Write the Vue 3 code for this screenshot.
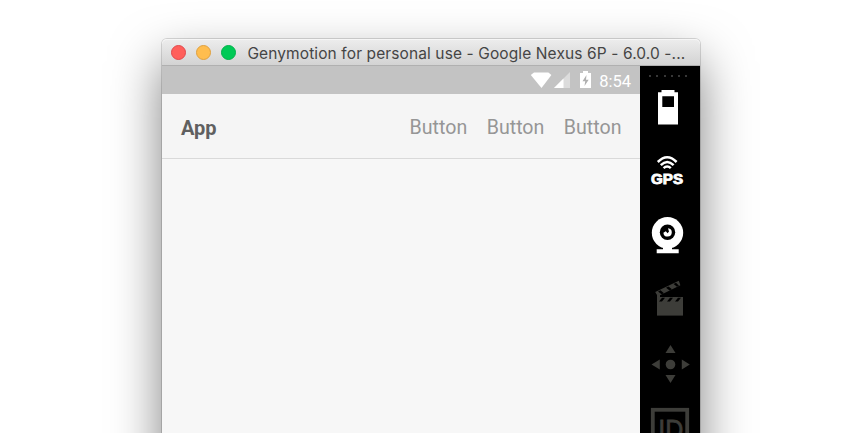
<script setup>
const lights = ['red', 'amber', 'green']
const actions = ['Button', 'Button', 'Button']
</script>

<template>
  <main class="stage">
    <section class="window">
      <header class="titlebar">
        <span v-for="light in lights" :key="light" class="light" :class="light"></span>
        <span class="title">Genymotion for personal use - Google Nexus 6P - 6.0.0 -...</span>
      </header>
      <div class="content">
        <div class="screen">
          <div class="status">
            <svg class="signals" width="64" height="28" viewBox="0 0 64 28">
              <path d="M0.8 9L4 6.5H18.4L21.4 9L11.5 22Z" fill="#fff" />
              <path d="M24 22L40 6V22Z" fill="#dcdcdc" />
              <path d="M24 22L33.5 12.5V22Z" fill="#fff" />
              <path d="M50 7H53V5H58V7H61V22H50Z" fill="#fff" />
              <path d="M56.5 9L52.5 15.2H55.2L54.5 20L58.7 13.8H56Z" fill="#b0b0b0" />
            </svg>
            <span class="clock">8:54</span>
          </div>
          <nav class="appbar">
            <strong class="name">App</strong>
            <span v-for="(action, i) in actions" :key="i" class="action">{{ action }}</span>
          </nav>
        </div>
        <aside class="tools">
          <div class="grip"><i v-for="n in 6" :key="n"></i></div>
          <svg class="tool" viewBox="0 0 60 64">
            <path fill="#fff" fill-rule="evenodd" d="M21.5 12H34.5V14.3H38V46.6H18V14.3H21.5ZM22.3 18.2V29H34V18.2Z" />
          </svg>
          <svg class="tool" viewBox="0 0 60 64">
            <g fill="none" stroke="#fff" stroke-width="2.5">
              <path d="M17.8 20Q27.2 10.5 36.6 20" />
              <path d="M20.8 23.2Q27.2 16.8 33.6 23.2" />
              <path d="M23.6 26.2Q27.2 22.8 30.8 26.2" />
            </g>
            <text class="gps" x="11" y="42.2" textLength="32" lengthAdjust="spacingAndGlyphs">GPS</text>
          </svg>
          <svg class="tool" viewBox="0 0 60 64">
            <circle cx="27.5" cy="26.8" r="15.7" fill="#fff" />
            <path d="M23 40H32V43.2H38.7V47.3H16.7V43.2H23Z" fill="#fff" />
            <circle cx="27.5" cy="26.3" r="7.7" fill="#000" />
            <path d="M28 22.2A4.2 4.2 0 1 1 23.4 26.7L25.8 25.2L27.6 27.2L29 25.6Z" fill="#fff" />
          </svg>
          <svg class="tool dim" viewBox="0 0 60 64">
            <path d="M17 27H43V45.6H17Z" />
            <path d="M15.2 22L38.8 10.8L40.4 15.2L20 25.2V27H17V25Z" />
            <g fill="#000">
              <path d="M19 31.5L22 27.7H25L22 31.5ZM27 31.5L30 27.7H33L30 31.5ZM35 31.5L38 27.7H41L38 31.5Z" />
              <path d="M18 21.6L20.5 20.3L24 23.2L21.6 24.3ZM26 17.8L28.5 16.5L32 19.3L29.6 20.5ZM33.6 14L36 12.8L39 15.7L37 16.8Z" />
            </g>
          </svg>
          <svg class="tool dim" viewBox="0 0 60 64">
            <circle cx="30.5" cy="30.5" r="4.8" />
            <path d="M30.5 11L35.5 19H25.5ZM30.5 49L35.5 41H25.5ZM11.5 30.5L19.8 25.5V35.5ZM49.8 30.5L41.8 25.5V35.5Z" />
          </svg>
          <svg class="tool dim" viewBox="0 0 60 64">
            <rect x="12.8" y="11.8" width="34.4" height="36" fill="none" stroke="#3d3d39" stroke-width="3.8" />
            <text class="ident" x="18.3" y="41" textLength="25" lengthAdjust="spacingAndGlyphs">ID</text>
          </svg>
        </aside>
      </div>
    </section>
  </main>
</template>

<style>
body { margin: 0; background: #fff; }
</style>

<style scoped>
.stage {
  box-sizing: border-box;
  width: 862px;
  height: 433px;
  padding: 39px 0 0 162px;
  overflow: hidden;
  background: #fff;
}
.window {
  width: 538px;
  height: 640px;
  border-radius: 5px 5px 0 0;
  box-shadow: 0 0 0 1px rgba(0, 0, 0, .14), 0 22px 50px rgba(0, 0, 0, .5);
}
.titlebar {
  box-sizing: border-box;
  display: flex;
  align-items: center;
  height: 27px;
  padding-left: 9px;
  border-bottom: 1px solid #b0b0b0;
  border-radius: 5px 5px 0 0;
  background: linear-gradient(#ededed, #d3d3d3);
  box-shadow: inset 0 1px #f6f6f6;
}
.light {
  box-sizing: border-box;
  width: 15px;
  height: 15px;
  margin-right: 9.8px;
  border: 1px solid;
  border-radius: 50%;
  flex: none;
}
.red { background: #ff5f5b; border-color: #e2484b; }
.amber { background: #ffbd4e; border-color: #dfa03f; }
.green { background: #00ca56; border-color: #00b14a; }
.title {
  margin: 3px 0 0 2px;
  color: #454545;
  font: 15.5px/26px Inter, sans-serif;
  letter-spacing: 0.11px;
  white-space: nowrap;
}
.content { display: flex; height: 613px; }
.screen { width: 478px; background: #f7f7f7; }
.status {
  display: flex;
  justify-content: flex-end;
  height: 28px;
  padding-right: 9px;
  background: #c3c3c3;
}
.signals { margin-right: 5px; }
.clock { color: #fff; font: 16.5px/31px Roboto, sans-serif; }
.appbar {
  box-sizing: border-box;
  display: flex;
  align-items: center;
  gap: 19.5px;
  height: 65px;
  padding: 3px 18.5px 0 19px;
  border-bottom: 1px solid #d9d9d9;
  background: #f5f5f5;
  font: 20px/24px Roboto, sans-serif;
}
.name { margin-right: auto; color: #606060; font-weight: 700; }
.action { color: #969696; font-size: 19.6px; }
.tools { width: 60px; background: #000; overflow: hidden; }
.grip { display: flex; gap: 5.3px; height: 3px; padding: 9px 0 0 9px; }
.grip i { width: 2px; height: 2px; background: #373737; }
.tool { display: block; width: 60px; height: 64px; }
.dim { fill: #3d3d39; }
.gps { fill: #fff; stroke: #fff; stroke-width: .9px; font: bold 14.5px "Liberation Sans", sans-serif; }
.ident { stroke: #3d3d39; stroke-width: .8px; font: 28px "Liberation Sans", sans-serif; }
</style>
